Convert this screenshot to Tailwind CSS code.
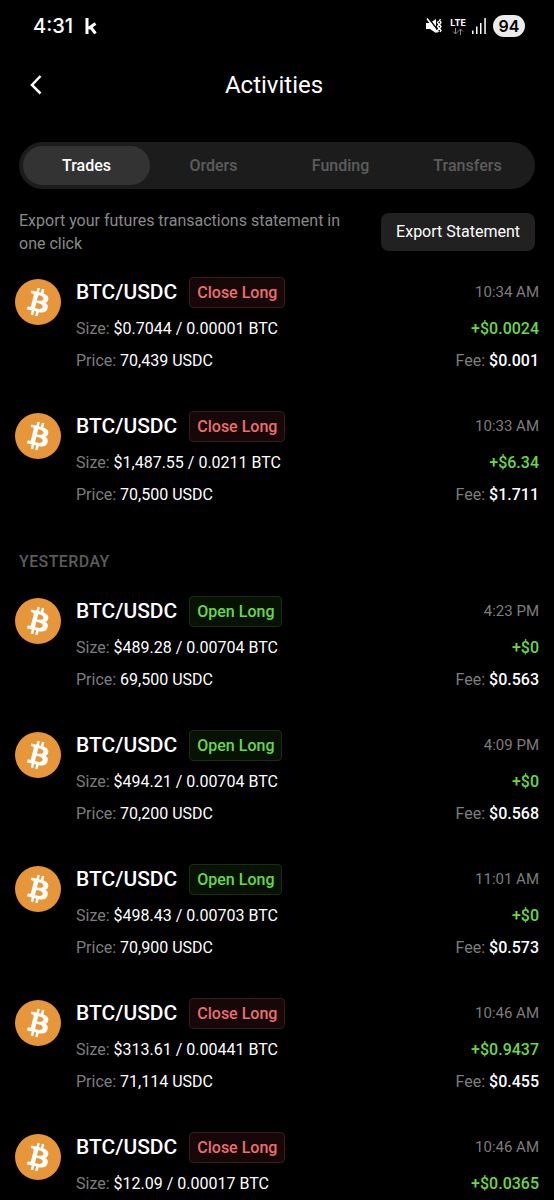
<!DOCTYPE html>
<html lang="en">
<head>
<meta charset="utf-8">
<meta name="viewport" content="width=device-width, initial-scale=1">
<title>Activities</title>
<script src="https://cdn.jsdelivr.net/npm/@tailwindcss/browser@4"></script>
</head>
<body class="flex h-screen flex-col overflow-hidden bg-black font-['Roboto',sans-serif] text-base text-white">
<svg class="hidden" aria-hidden="true">
  <symbol id="btc" viewBox="0 0 32 32">
    <circle cx="16" cy="16" r="16" fill="#e8963a"/>
    <path fill="#fff" d="M23.189 14.02c.314-2.096-1.283-3.223-3.465-3.975l.708-2.84-1.728-.43-.69 2.765c-.454-.114-.92-.22-1.385-.326l.695-2.783L15.596 6l-.708 2.839c-.376-.086-.746-.17-1.104-.26l.002-.009-2.384-.595-.46 1.846s1.283.294 1.256.312c.7.175.826.638.805 1.006l-.806 3.235c.048.012.11.03.18.057l-.183-.045-1.13 4.532c-.086.212-.303.531-.793.41.018.025-1.256-.313-1.256-.313l-.858 1.978 2.25.561c.418.105.828.215 1.231.318l-.715 2.872 1.727.43.708-2.84c.472.127.93.245 1.378.357l-.706 2.828 1.728.43.715-2.866c2.948.558 5.164.333 6.097-2.333.752-2.146-.037-3.385-1.588-4.192 1.13-.26 1.98-1.003 2.207-2.538zm-3.95 5.538c-.533 2.147-4.148.986-5.32.695l.95-3.805c1.172.293 4.929.872 4.37 3.11zm.535-5.569c-.487 1.953-3.495.96-4.47.717l.86-3.45c.975.243 4.118.696 3.61 2.733z"/>
  </symbol>
</svg>

<!-- Status bar -->
<div class="flex h-[52px] shrink-0 items-center pr-[29px] pl-[33px] font-['Inter',sans-serif]">
  <span class="text-xl font-medium">4:31</span>
  <svg class="ml-3 h-4 w-3" viewBox="0 0 12 16" fill="none" stroke="#fff" stroke-width="3" aria-hidden="true"><path d="M2 0v16M10.500 5.500L3.500 10.500M5.500 9l5 6.500"/></svg>
  <div class="ml-auto flex items-center">
    <svg class="h-4 w-4" viewBox="0 0 16 16" fill="none" aria-hidden="true">
      <path d="M0 5h4L10 1v14L4 11H0z" fill="#fff"/>
      <path d="M2.500 0L12 12.500" stroke="#000" stroke-width="1.500"/>
      <path d="M1 .5L11.500 14.500" stroke="#fff" stroke-width="1.500"/>
      <path d="M12.500 3l-1 1.500 1.500 2-1.500 2 1.500 2-1.500 2 1 1.500M14.500 1l-1 1.500 1.500 2-1.500 2 1.500 2-1.500 2 1.500 2-1 1.500" stroke="#fff" stroke-width="1.300"/>
    </svg>
    <div class="ml-2 flex flex-col items-center gap-px">
      <span class="text-[9px] leading-[9px] font-bold">LTE</span>
      <svg class="h-[7px] w-3" viewBox="0 0 12 7" fill="none" stroke="#8a8a8a" aria-hidden="true"><path d="M3.500 0v6M1 3.500L3.500 6 6 3.500M8.500 7V1M6 3.500L8.500 1 11 3.500"/></svg>
    </div>
    <svg class="ml-1.5 h-4 w-3.5" viewBox="0 0 14 16" fill="#fff" aria-hidden="true"><path d="M0 12.500h1.500V16H0zM4 8.500h1.500V16H4zM8 5h1.500v11H8zM12.300 0h1.500v16h-1.500z"/></svg>
    <span class="ml-[7px] flex h-[22px] w-8 items-center justify-center rounded-full bg-[#ececec] text-base font-semibold text-black">94</span>
  </div>
</div>

<header class="grid h-[66px] shrink-0 grid-cols-[1fr_auto_1fr] items-center pr-[30px] pl-6">
  <button class="flex size-6 items-center justify-center" aria-label="Back">
    <svg class="h-5 w-3" viewBox="0 0 12 20" fill="none" stroke="#fff" stroke-width="2.500" aria-hidden="true"><path d="M10.500 1L2 10l8.500 8.500"/></svg>
  </button>
  <h1 class="text-2xl">Activities</h1>
</header>

<nav class="mx-[19px] mt-6 grid h-[47px] shrink-0 grid-cols-4 rounded-full bg-[#1c1c1c] p-1 font-medium text-[#5c5c5c]">
  <button class="h-[39px] rounded-full bg-[#333] text-white">Trades</button>
  <button>Orders</button>
  <button>Funding</button>
  <button>Transfers</button>
</nav>

<section class="mx-[19px] mt-5 flex shrink-0 items-center justify-between gap-6">
  <p class="leading-[23px] text-[#8a8a8a]">Export your futures transactions statement in one click</p>
  <button class="h-[38px] shrink-0 rounded-lg bg-[#212121] px-[15px]">Export Statement</button>
</section>

<main class="mt-[22px] min-h-0 flex-1 overflow-y-auto px-[15px] [scrollbar-width:none]">
  <ul class="flex flex-col gap-[34px]">
    <li class="flex items-start">
      <svg class="mt-0.5 size-[46px] shrink-0" role="img" aria-label="Bitcoin"><use href="#btc"/></svg>
      <div class="ml-[15px] flex-1">
        <div class="mb-[5px] flex items-center"><h2 class="text-[21px] leading-[31px] font-medium">BTC/USDC</h2><span class="ml-3 h-[31px] rounded border border-[#3a1a1a] bg-[#160808] px-[7px] leading-[30px] font-medium text-[#ee6e6e]">Close Long</span><time class="ml-auto text-[15px] text-[#7d7d7d]">10:34 AM</time></div>
        <div class="flex justify-between leading-8"><p><span class="text-[#7d7d7d]">Size:</span> $0.7044 / 0.00001 BTC</p><p class="font-medium text-[#68d84a]">+$0.0024</p></div>
        <div class="flex justify-between leading-8"><p><span class="text-[#7d7d7d]">Price:</span> 70,439 USDC</p><p class="font-medium"><span class="font-normal text-[#7d7d7d]">Fee:</span> $0.001</p></div>
      </div>
    </li>
    <li class="flex items-start">
      <svg class="mt-0.5 size-[46px] shrink-0" role="img" aria-label="Bitcoin"><use href="#btc"/></svg>
      <div class="ml-[15px] flex-1">
        <div class="mb-[5px] flex items-center"><h2 class="text-[21px] leading-[31px] font-medium">BTC/USDC</h2><span class="ml-3 h-[31px] rounded border border-[#3a1a1a] bg-[#160808] px-[7px] leading-[30px] font-medium text-[#ee6e6e]">Close Long</span><time class="ml-auto text-[15px] text-[#7d7d7d]">10:33 AM</time></div>
        <div class="flex justify-between leading-8"><p><span class="text-[#7d7d7d]">Size:</span> $1,487.55 / 0.0211 BTC</p><p class="font-medium text-[#68d84a]">+$6.34</p></div>
        <div class="flex justify-between leading-8"><p><span class="text-[#7d7d7d]">Price:</span> 70,500 USDC</p><p class="font-medium"><span class="font-normal text-[#7d7d7d]">Fee:</span> $1.711</p></div>
      </div>
    </li>
  </ul>

  <h2 class="mt-[39px] mb-[22px] ml-1 leading-6 font-medium tracking-wide text-[#5c5c5c]">YESTERDAY</h2>

  <ul class="flex flex-col gap-[34px]">
    <li class="flex items-start">
      <svg class="mt-0.5 size-[46px] shrink-0" role="img" aria-label="Bitcoin"><use href="#btc"/></svg>
      <div class="ml-[15px] flex-1">
        <div class="mb-[5px] flex items-center"><h2 class="text-[21px] leading-[31px] font-medium">BTC/USDC</h2><span class="ml-3 h-[31px] rounded border border-[#16300f] bg-[#071204] px-[7px] leading-[30px] font-medium text-[#68d84a]">Open Long</span><time class="ml-auto text-[15px] text-[#7d7d7d]">4:23 PM</time></div>
        <div class="flex justify-between leading-8"><p><span class="text-[#7d7d7d]">Size:</span> $489.28 / 0.00704 BTC</p><p class="font-medium text-[#68d84a]">+$0</p></div>
        <div class="flex justify-between leading-8"><p><span class="text-[#7d7d7d]">Price:</span> 69,500 USDC</p><p class="font-medium"><span class="font-normal text-[#7d7d7d]">Fee:</span> $0.563</p></div>
      </div>
    </li>
    <li class="flex items-start">
      <svg class="mt-0.5 size-[46px] shrink-0" role="img" aria-label="Bitcoin"><use href="#btc"/></svg>
      <div class="ml-[15px] flex-1">
        <div class="mb-[5px] flex items-center"><h2 class="text-[21px] leading-[31px] font-medium">BTC/USDC</h2><span class="ml-3 h-[31px] rounded border border-[#16300f] bg-[#071204] px-[7px] leading-[30px] font-medium text-[#68d84a]">Open Long</span><time class="ml-auto text-[15px] text-[#7d7d7d]">4:09 PM</time></div>
        <div class="flex justify-between leading-8"><p><span class="text-[#7d7d7d]">Size:</span> $494.21 / 0.00704 BTC</p><p class="font-medium text-[#68d84a]">+$0</p></div>
        <div class="flex justify-between leading-8"><p><span class="text-[#7d7d7d]">Price:</span> 70,200 USDC</p><p class="font-medium"><span class="font-normal text-[#7d7d7d]">Fee:</span> $0.568</p></div>
      </div>
    </li>
    <li class="flex items-start">
      <svg class="mt-0.5 size-[46px] shrink-0" role="img" aria-label="Bitcoin"><use href="#btc"/></svg>
      <div class="ml-[15px] flex-1">
        <div class="mb-[5px] flex items-center"><h2 class="text-[21px] leading-[31px] font-medium">BTC/USDC</h2><span class="ml-3 h-[31px] rounded border border-[#16300f] bg-[#071204] px-[7px] leading-[30px] font-medium text-[#68d84a]">Open Long</span><time class="ml-auto text-[15px] text-[#7d7d7d]">11:01 AM</time></div>
        <div class="flex justify-between leading-8"><p><span class="text-[#7d7d7d]">Size:</span> $498.43 / 0.00703 BTC</p><p class="font-medium text-[#68d84a]">+$0</p></div>
        <div class="flex justify-between leading-8"><p><span class="text-[#7d7d7d]">Price:</span> 70,900 USDC</p><p class="font-medium"><span class="font-normal text-[#7d7d7d]">Fee:</span> $0.573</p></div>
      </div>
    </li>
    <li class="flex items-start">
      <svg class="mt-0.5 size-[46px] shrink-0" role="img" aria-label="Bitcoin"><use href="#btc"/></svg>
      <div class="ml-[15px] flex-1">
        <div class="mb-[5px] flex items-center"><h2 class="text-[21px] leading-[31px] font-medium">BTC/USDC</h2><span class="ml-3 h-[31px] rounded border border-[#3a1a1a] bg-[#160808] px-[7px] leading-[30px] font-medium text-[#ee6e6e]">Close Long</span><time class="ml-auto text-[15px] text-[#7d7d7d]">10:46 AM</time></div>
        <div class="flex justify-between leading-8"><p><span class="text-[#7d7d7d]">Size:</span> $313.61 / 0.00441 BTC</p><p class="font-medium text-[#68d84a]">+$0.9437</p></div>
        <div class="flex justify-between leading-8"><p><span class="text-[#7d7d7d]">Price:</span> 71,114 USDC</p><p class="font-medium"><span class="font-normal text-[#7d7d7d]">Fee:</span> $0.455</p></div>
      </div>
    </li>
    <li class="flex items-start">
      <svg class="mt-0.5 size-[46px] shrink-0" role="img" aria-label="Bitcoin"><use href="#btc"/></svg>
      <div class="ml-[15px] flex-1">
        <div class="mb-[5px] flex items-center"><h2 class="text-[21px] leading-[31px] font-medium">BTC/USDC</h2><span class="ml-3 h-[31px] rounded border border-[#3a1a1a] bg-[#160808] px-[7px] leading-[30px] font-medium text-[#ee6e6e]">Close Long</span><time class="ml-auto text-[15px] text-[#7d7d7d]">10:46 AM</time></div>
        <div class="flex justify-between leading-8"><p><span class="text-[#7d7d7d]">Size:</span> $12.09 / 0.00017 BTC</p><p class="font-medium text-[#68d84a]">+$0.0365</p></div>
      </div>
    </li>
  </ul>
</main>
</body>
</html>
